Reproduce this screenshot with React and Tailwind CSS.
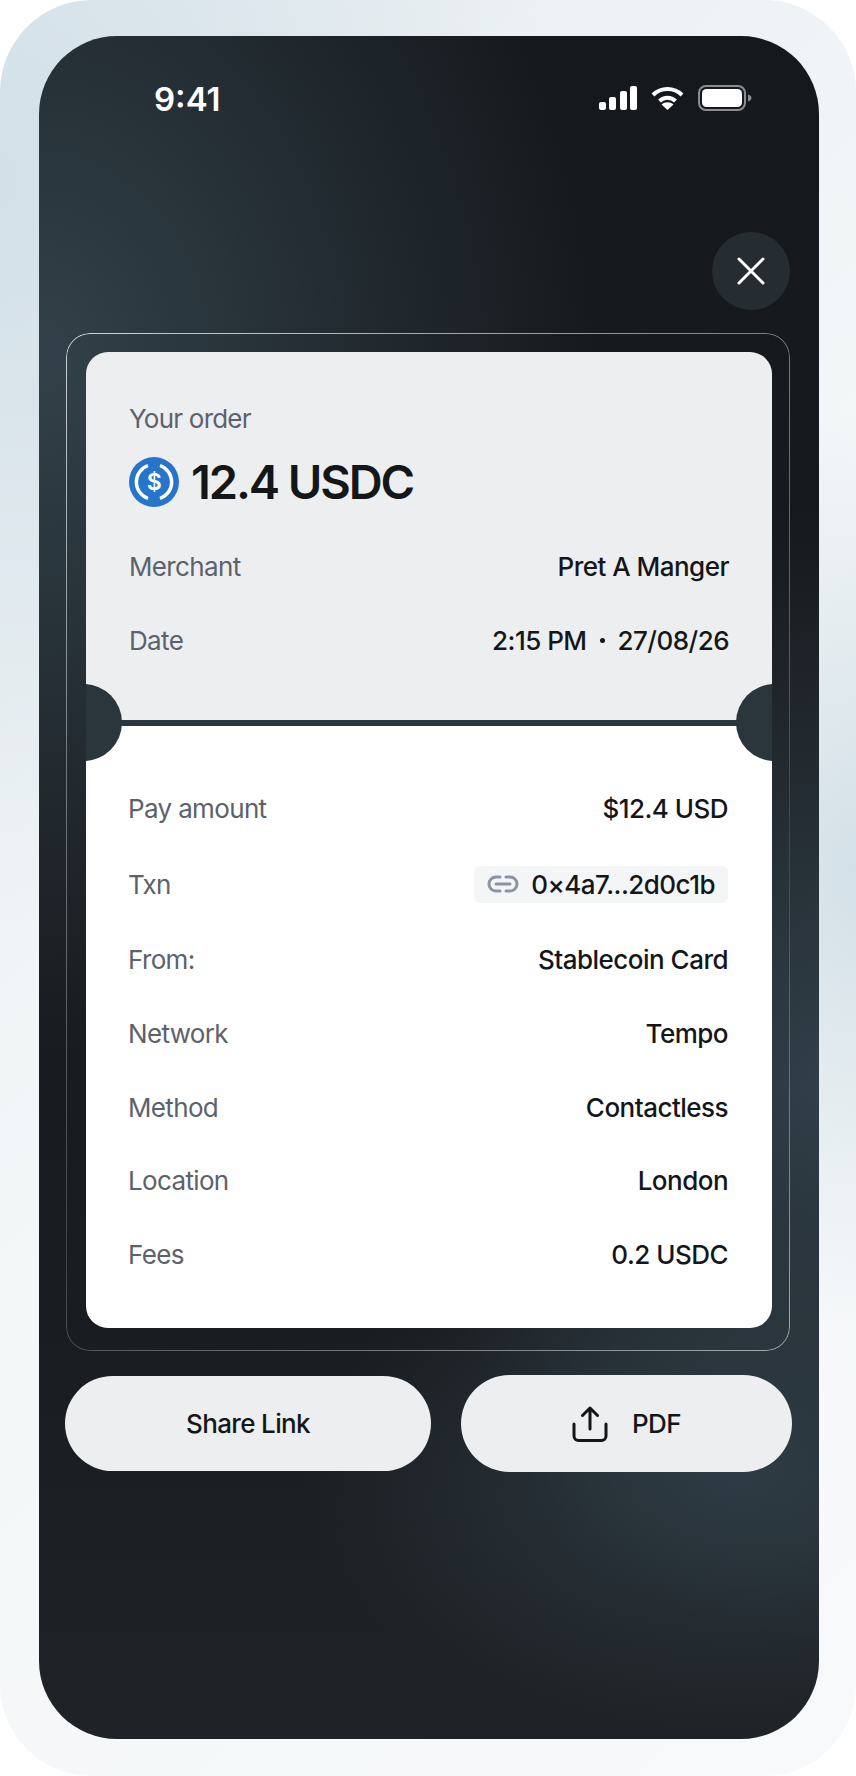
const details = [
  { label: 'From:', value: 'Stablecoin Card' },
  { label: 'Network', value: 'Tempo' },
  { label: 'Method', value: 'Contactless' },
  { label: 'Location', value: 'London' },
  { label: 'Fees', value: '0.2 USDC' },
];

function Row({ label, children }) {
  return (
    <div className="flex h-[37px] items-center justify-between">
      <span className="text-[#5c626b]">{label}</span>
      {children}
    </div>
  );
}

function StatusIcons() {
  return (
    <div className="flex items-center gap-[14px]">
      <svg width="38" height="24" viewBox="0 0 38 24" fill="#fff">
        <rect x="0" y="16" width="7" height="8" rx="2" />
        <rect x="10" y="11" width="7" height="13" rx="2" />
        <rect x="21" y="5" width="7" height="19" rx="2" />
        <rect x="31" y="0" width="7" height="24" rx="2" />
      </svg>
      <svg width="33" height="24" viewBox="0 0 33 24" fill="none" stroke="#fff" strokeWidth="4">
        <path d="M2 9 C10 1 23 1 31 9" />
        <path d="M8.5 15 C13 10.5 20 10.5 24.5 15" />
        <path d="M16.5 24 L10.5 18.5 C14 15.5 19 15.5 22.5 18.5 Z" fill="#fff" stroke="none" />
      </svg>
      <svg width="54" height="26" viewBox="0 0 54 26" fill="none">
        <rect x="1" y="1" width="46" height="24" rx="7" stroke="#8b8d90" strokeWidth="2" />
        <rect x="4" y="4" width="40" height="18" rx="4.5" fill="#fff" />
        <path d="M50 9.5 C52.5 10.5 53.5 11.5 53.5 13 C53.5 14.5 52.5 15.5 50 16.5 Z" fill="#8b8d90" />
      </svg>
    </div>
  );
}

function UsdcIcon() {
  return (
    <svg width="50" height="50" viewBox="0 0 50 50" className="shrink-0">
      <circle cx="25" cy="25" r="25" fill="#2775ca" />
      <path d="M19 8.5 A17.5 17.5 0 0 0 19 41.5" fill="none" stroke="#fff" strokeWidth="3.4" />
      <path d="M31 8.5 A17.5 17.5 0 0 1 31 41.5" fill="none" stroke="#fff" strokeWidth="3.4" />
      <text x="25" y="33" textAnchor="middle" fontSize="23" fontWeight="600" fill="#fff" fontFamily="Inter, sans-serif">$</text>
    </svg>
  );
}

export default function App() {
  return (
    <div className="h-[1776px] w-[856px] overflow-hidden bg-white font-['Inter',sans-serif]">
      <div className="h-full rounded-[92px] bg-[radial-gradient(560px_760px_at_0px_180px,#d3e0e8,transparent),radial-gradient(260px_460px_at_856px_870px,#d3e0e7,transparent),linear-gradient(135deg,#e6edf1,#f4f7f8_50%,#f7f9fa)] pl-[39px] pr-[37px] pt-9">
        <div className="h-[1703px] rounded-[78px] bg-[radial-gradient(560px_700px_at_0px_320px,#324149,transparent),radial-gradient(400px_560px_at_780px_1050px,#313f48,transparent),radial-gradient(440px_260px_at_700px_1440px,#2d3a42,transparent),linear-gradient(180deg,#15191d,#191c20_75%,#1f2327)] pl-[27px] pr-[29px] pt-11">
          <div className="flex h-9 items-center justify-between pl-[88px] pr-[38px]">
            <span className="pt-0.5 text-[33px] font-semibold leading-none text-white">9:41</span>
            <StatusIcons />
          </div>

          <div className="mt-[116px] flex justify-end">
            <button className="flex h-[78px] w-[78px] items-center justify-center rounded-full bg-[#252d32]">
              <svg width="30" height="30" viewBox="0 0 30 30" stroke="#fff" strokeWidth="3" strokeLinecap="round">
                <path d="M3 3 L27 27 M27 3 L3 27" />
              </svg>
            </button>
          </div>

          <div className="relative mt-[23px] rounded-[24px] pb-[23px] pl-5 pr-[18px] pt-[19px]">
            <div className="absolute inset-0 rounded-[24px] bg-[linear-gradient(150deg,#d0d7da,#737c81_30%,#3e464b_65%,#a3abb0)] p-px [mask:linear-gradient(#000_0_0)_content-box_exclude,linear-gradient(#000_0_0)]" />

            <div className="relative overflow-hidden rounded-[22px] text-[26px] tracking-[-0.025em] text-[#14171a]">
              <div className="h-[368px] bg-[#edeef0] px-[43px] pt-[46px]">
                <div className="flex h-10 items-center tracking-[-0.03em] text-[#5c626b]">Your order</div>
                <div className="mt-[19px] flex h-[50px] items-center gap-[12px]">
                  <UsdcIcon />
                  <span className="text-[47px] font-semibold tracking-[-0.045em]">12.4 USDC</span>
                </div>
                <div className="mt-[41px] flex flex-col gap-[37px]">
                  <Row label="Merchant">
                    <span className="font-medium tracking-[-0.02em]">Pret A Manger</span>
                  </Row>
                  <Row label="Date">
                    <span className="flex items-center gap-[13px] font-medium tracking-[-0.02em]">
                      2:15 PM
                      <span className="h-[5px] w-[5px] rounded-full bg-[#14171a]" />
                      27/08/26
                    </span>
                  </Row>
                </div>
              </div>

              <div className="h-[6px] bg-[#2a373e]" />

              <div className="flex h-[602px] flex-col gap-[36.7px] bg-white pl-[42px] pr-[44px] pt-[64px]">
                <Row label="Pay amount">
                  <span className="font-medium tracking-[-0.02em]">$12.4 USD</span>
                </Row>
                <div className="flex h-[41px] items-center justify-between">
                  <span className="text-[#5c626b]">Txn</span>
                  <span className="flex h-[37px] items-center gap-3 rounded-[6px] bg-[#f4f5f7] px-[13px] font-medium tracking-[-0.02em]">
                    <svg width="32" height="18" viewBox="0 0 32 18" fill="none" stroke="#8a94a3" strokeWidth="3" strokeLinecap="round">
                      <path d="M13 2 H9 A7 7 0 0 0 9 16 H13" />
                      <path d="M19 2 H23 A7 7 0 0 1 23 16 H19" />
                      <path d="M9 9 H23" />
                    </svg>
                    0×4a7...2d0c1b
                  </span>
                </div>
                {details.map((item) => (
                  <Row key={item.label} label={item.label}>
                    <span className="font-medium tracking-[-0.02em]">{item.value}</span>
                  </Row>
                ))}
              </div>

              <div className="absolute left-[-41px] top-[332px] h-[77px] w-[77px] rounded-full bg-[#2a353c]" />
              <div className="absolute right-[-41px] top-[332px] h-[77px] w-[77px] rounded-full bg-[#2a353c]" />
            </div>
          </div>

          <div className="-ml-px -mr-0.5 mt-[24px] flex items-center gap-[30px] text-[26px] font-medium tracking-[-0.025em] text-[#14171a]">
            <button className="flex h-[95px] w-[366px] items-center justify-center rounded-full bg-[#edeef0]">Share Link</button>
            <button className="flex h-[97px] w-[331px] items-center justify-center gap-[24px] rounded-full bg-[#edeef0]">
              <svg width="36" height="36" viewBox="0 0 36 36" fill="none" stroke="#14171a" strokeWidth="3" strokeLinecap="round" strokeLinejoin="round">
                <path d="M18 23 V2 M10.5 9.5 L18 2 L25.5 9.5" />
                <path d="M2 18 V30 A4.5 4.5 0 0 0 6.5 34.5 H29.5 A4.5 4.5 0 0 0 34 30 V18" />
              </svg>
              PDF
            </button>
          </div>
        </div>
      </div>
    </div>
  );
}
